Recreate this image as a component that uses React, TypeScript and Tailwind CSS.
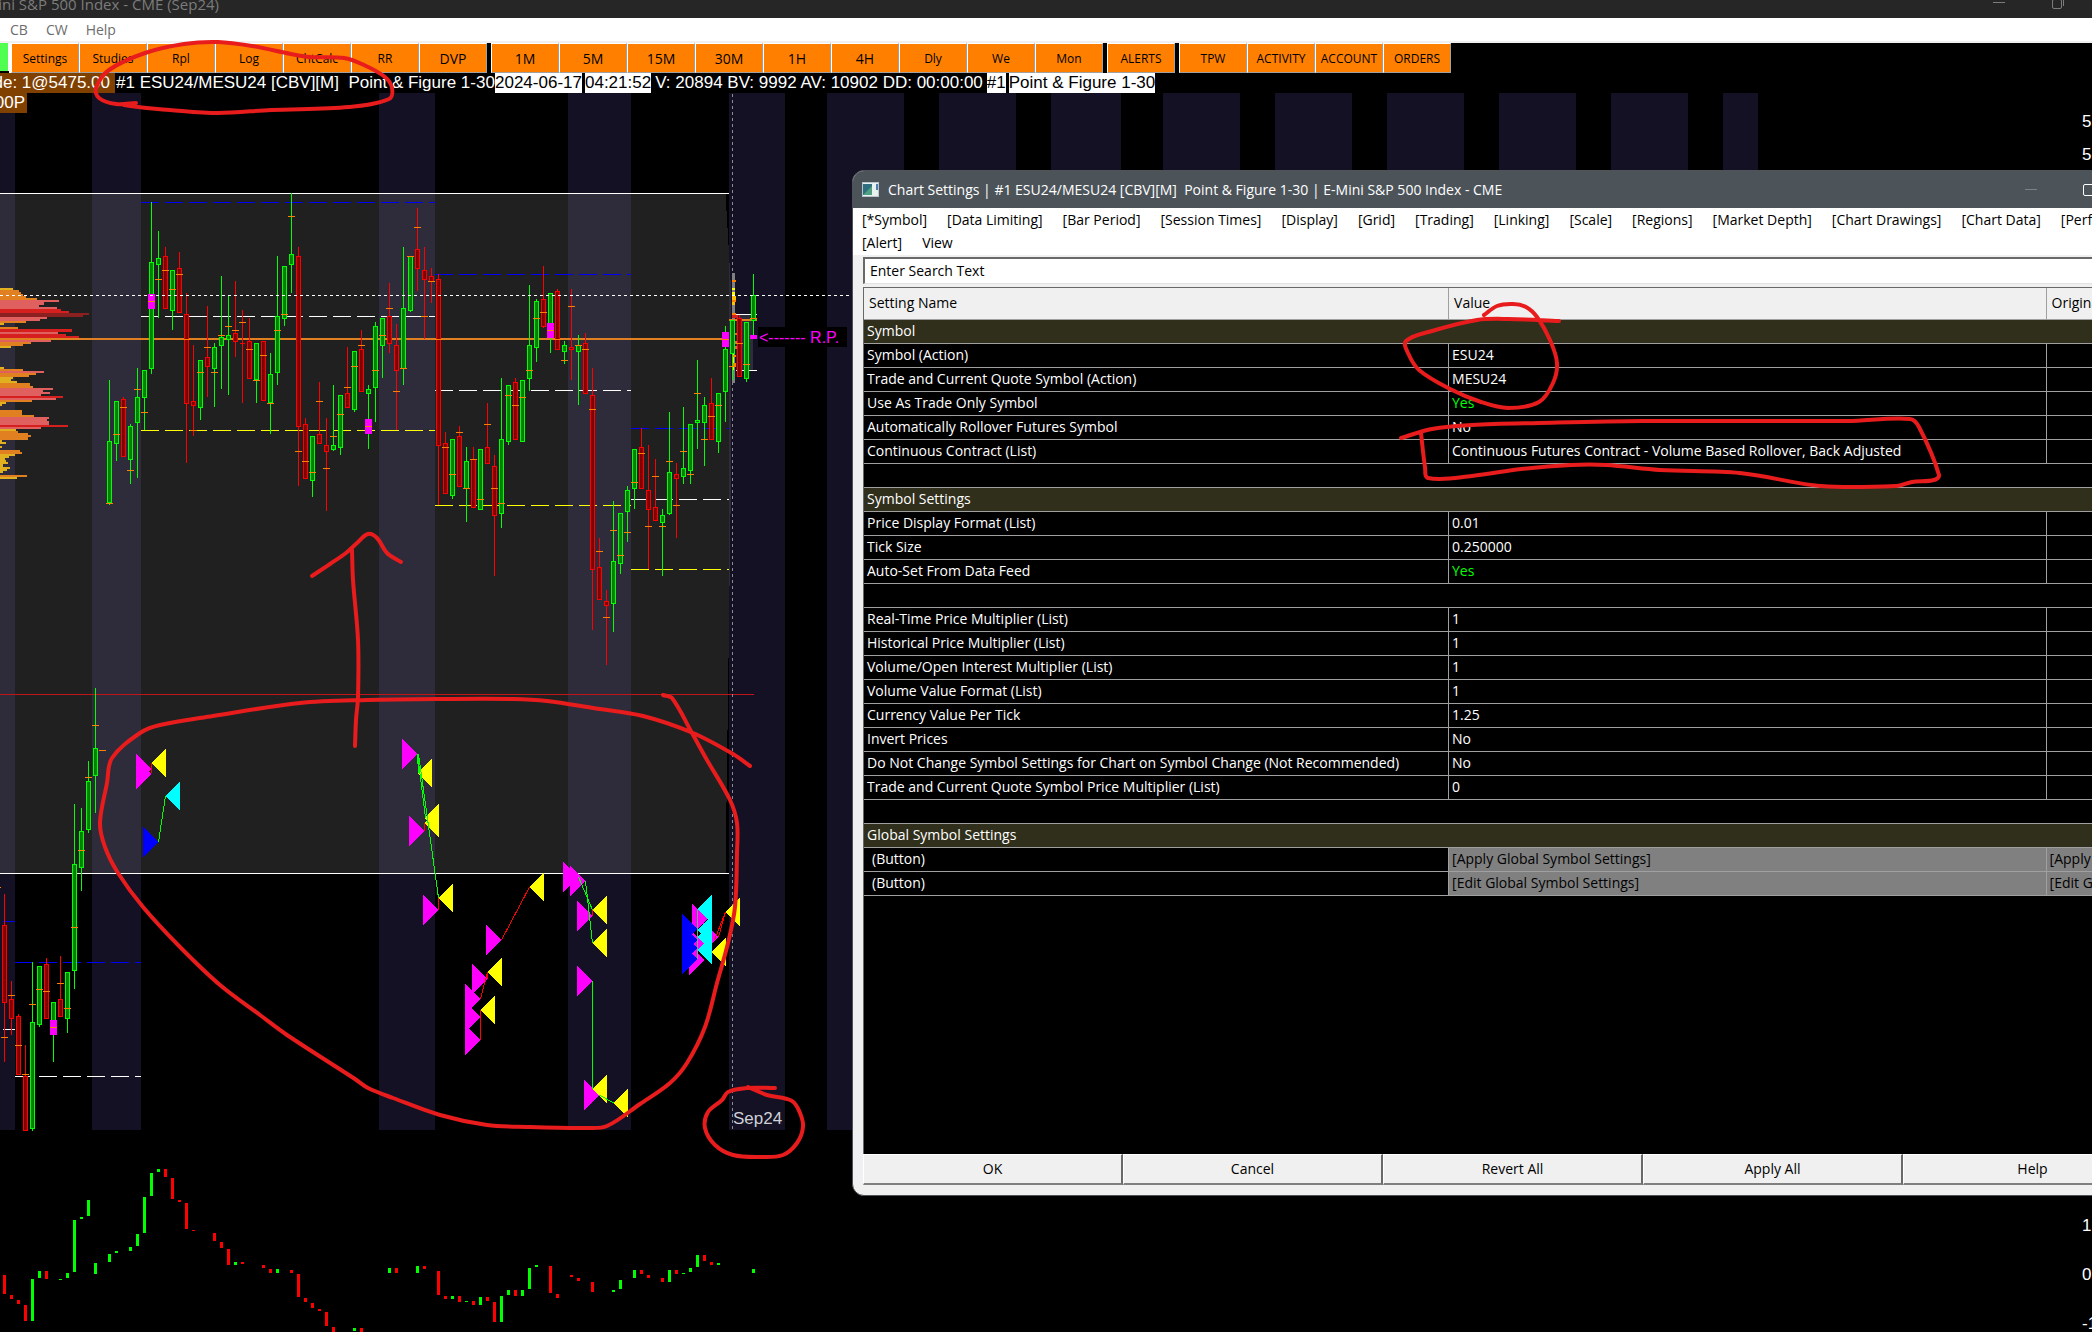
import React from "react";

const UI = "font-['Open_Sans','Noto_Sans',sans-serif]";
const CHART = "font-['Liberation_Sans',Arial,sans-serif]";

/* ---------- chart data ---------- */

const PITCH = 7;
const FIRST_X = 109;
const TOP = 180;
const STEPS = 3; // price steps per pixel
const barX = (i: number) => FIRST_X + PITCH * i;
const priceY = (v: number) => Math.floor(TOP + v / STEPS);

// [index, up, high, low, body top, body bottom, mark]
type Bar = [number, 0 | 1, number, number, number, number, number];

const bars: Bar[] = [
  [-15, 0, 2142, 2646, 2235, 2469, 2572], [-14, 0, 2403, 2565, 2457, 2517, 2446],
  [-13, 0, 2502, 2685, 2508, 2685, 2596], [-12, 0, 2595, 2853, 2688, 2853, 2683],
  [-11, 1, 2346, 2853, 2526, 2847, 2473], [-10, 1, 2358, 2541, 2358, 2535, 2428],
  [-9, 0, 2334, 2517, 2352, 2517, 2434], [-8, 1, 2466, 2646, 2466, 2530, 2542],
  [-7, 0, 2328, 2511, 2457, 2511, 2410], [-6, 1, 2376, 2559, 2376, 2517, 2485],
  [-5, 1, 1872, 2427, 2052, 2373, 2242], [-4, 1, 1884, 2133, 1953, 2064, 2011],
  [-3, 1, 1743, 1959, 1803, 1950, 1792], [-2, 1, 1524, 1899, 1704, 1788, 1636],
  [0, 1, 600, 975, 783, 971, 970], [1, 1, 663, 843, 663, 792, 763],
  [2, 0, 651, 833, 657, 833, 682], [3, 1, 732, 912, 738, 840, 871],
  [4, 1, 564, 894, 651, 729, 628], [5, 1, 570, 752, 570, 654, 697],
  [6, 1, 66, 582, 246, 567, 364], [7, 1, 153, 414, 234, 255, 298],
  [8, 0, 201, 387, 228, 387, 271], [9, 1, 270, 450, 270, 393, 328],
  [10, 0, 216, 399, 264, 399, 283], [11, 0, 339, 849, 402, 672, 478],
  [12, 0, 495, 768, 663, 678, 751], [13, 1, 540, 720, 540, 684, 577],
  [14, 0, 378, 651, 531, 561, 502], [15, 1, 489, 681, 501, 567, 577],
  [16, 1, 288, 627, 471, 498, 466], [17, 1, 345, 645, 465, 480, 439],
  [18, 0, 303, 531, 459, 486, 451], [19, 0, 390, 669, 489, 492, 427],
  [20, 0, 414, 597, 483, 597, 508], [21, 1, 489, 669, 489, 602, 601],
  [22, 0, 483, 665, 483, 665, 526], [23, 1, 519, 762, 582, 671, 670],
  [24, 1, 228, 615, 408, 579, 451], [25, 1, 258, 438, 258, 417, 403],
  [26, 1, 40, 339, 222, 255, 109], [27, 0, 201, 918, 228, 741, 814],
  [28, 0, 714, 897, 732, 897, 844], [29, 1, 768, 951, 768, 903, 877],
  [30, 0, 606, 792, 762, 792, 664], [31, 0, 714, 993, 795, 816, 865],
  [32, 1, 615, 813, 795, 810, 769], [33, 1, 645, 825, 645, 804, 703],
  [34, 0, 501, 684, 639, 684, 622], [35, 1, 513, 696, 513, 690, 559],
  [36, 0, 450, 636, 507, 636, 496], [37, 1, 615, 807, 627, 642, 739],
  [38, 1, 426, 726, 438, 624, 571], [39, 1, 414, 594, 414, 498, 466],
  [40, 0, 309, 519, 408, 492, 385], [41, 0, 432, 751, 495, 573, 634],
  [42, 1, 201, 615, 384, 567, 565], [43, 1, 228, 396, 228, 393, 229],
  [44, 0, 84, 333, 207, 267, 142], [45, 0, 201, 477, 270, 300, 409],
  [46, 0, 264, 369, 288, 306, 304], [47, 0, 282, 975, 297, 798, 478],
  [48, 0, 756, 942, 789, 942, 802], [49, 1, 777, 957, 777, 948, 883],
  [50, 0, 738, 921, 768, 921, 757], [51, 1, 801, 1026, 843, 927, 925],
  [52, 0, 801, 984, 837, 984, 838], [53, 1, 807, 990, 807, 990, 958],
  [54, 0, 669, 852, 801, 852, 733], [55, 0, 825, 1188, 858, 1008, 925],
  [56, 1, 594, 1044, 777, 1002, 970], [57, 1, 615, 795, 615, 786, 646],
  [58, 0, 594, 780, 606, 780, 676], [59, 1, 600, 786, 600, 786, 652],
  [60, 1, 315, 633, 495, 597, 571], [61, 1, 357, 546, 363, 504, 415],
  [62, 0, 258, 444, 357, 441, 397], [63, 1, 339, 519, 339, 456, 451],
  [64, 0, 327, 510, 333, 510, 477], [65, 1, 483, 552, 495, 516, 541],
  [66, 0, 327, 600, 501, 510, 379], [67, 1, 465, 675, 495, 516, 496],
  [68, 0, 459, 642, 489, 642, 508], [69, 0, 564, 1350, 645, 1170, 688],
  [70, 0, 1074, 1260, 1161, 1260, 1114], [71, 0, 1230, 1455, 1263, 1278, 1312],
  [72, 1, 963, 1356, 1143, 1272, 1051], [73, 1, 999, 1182, 999, 1152, 1126],
  [74, 1, 918, 1086, 930, 996, 1057], [75, 1, 807, 987, 807, 927, 907],
  [76, 0, 744, 927, 801, 927, 820], [77, 0, 795, 1168, 930, 990, 1039],
  [78, 0, 837, 1023, 981, 1023, 889], [79, 1, 987, 1188, 1005, 1029, 1039],
  [80, 1, 696, 1005, 876, 1002, 844], [81, 0, 849, 1074, 882, 897, 976],
  [82, 1, 681, 912, 864, 891, 814], [83, 1, 732, 912, 732, 873, 883],
  [84, 1, 540, 807, 720, 729, 640], [85, 1, 651, 858, 675, 729, 778],
  [86, 0, 594, 780, 669, 780, 709], [87, 1, 639, 819, 639, 786, 676],
  [88, 1, 438, 726, 507, 636, 478], [89, 1, 420, 600, 420, 522, 559],
  [90, 0, 405, 591, 414, 591, 490], [91, 1, 426, 606, 426, 598, 553],
  [92, 1, 282, 465, 345, 423, 415],
];

const magentaAt: Record<number, [number, number]> = {
  [-8]: [2520, 2565], 6: [342, 387], 37: [717, 762], 63: [429, 474], 88: [456, 501], 92: [465, 477],
};

// volume profile: [top, bottom, width, colour]
const G = "#e0b020", O = "#e08020", P = "#e06060", R = "#d62020", D = "#8b2020";
const profile: [number, number, number, string][] = [
  [324, 330, 39, G], [330, 336, 57, O], [336, 342, 63, O], [342, 348, 69, O], [348, 354, 78, O],
  [354, 360, 111, O], [360, 366, 177, P], [366, 375, 132, P], [375, 381, 117, P], [381, 387, 171, P],
  [387, 393, 183, R], [393, 399, 207, R], [399, 405, 267, D], [405, 411, 249, D], [411, 417, 141, P],
  [417, 423, 120, P], [423, 429, 78, O], [429, 435, 12, G], [441, 447, 54, O], [447, 456, 216, R],
  [456, 462, 174, P], [462, 468, 198, R], [468, 474, 237, R], [480, 486, 153, P], [486, 492, 93, O],
  [492, 498, 69, O], [498, 504, 33, G], [561, 567, 12, G], [567, 573, 69, O], [573, 579, 132, P],
  [579, 585, 108, O], [585, 591, 87, O], [591, 597, 39, G], [597, 603, 33, G], [603, 609, 51, G],
  [609, 618, 90, O], [618, 624, 99, O], [624, 630, 159, P], [630, 636, 129, P], [636, 642, 150, P],
  [642, 648, 123, P], [648, 654, 189, R], [654, 660, 168, P], [660, 666, 96, O], [666, 672, 18, G],
  [672, 678, 6, G], [690, 705, 66, O], [705, 711, 102, O], [711, 717, 147, P], [717, 723, 141, P],
  [723, 735, 147, P], [735, 741, 204, R], [741, 747, 123, P], [747, 753, 48, G], [753, 759, 54, O],
  [759, 765, 84, O], [765, 771, 93, O], [771, 780, 84, O], [780, 786, 6, G], [786, 792, 18, G],
  [798, 804, 6, G], [810, 816, 60, O], [816, 822, 66, O], [822, 828, 45, G], [828, 834, 27, G],
  [834, 840, 15, G], [840, 846, 18, G], [846, 852, 24, G], [852, 861, 9, G], [861, 867, 30, G],
  [867, 873, 21, G], [873, 879, 9, G], [885, 891, 81, O], [891, 897, 51, G],
];

// lower study: [index, up, top, bottom]
const study: [number, 0 | 1, number, number][] = [
  [-15, 0, 435, 491], [-14, 0, 495, 507], [-13, 0, 510, 522], [-12, 0, 525, 573], [-11, 1, 447, 573],
  [-10, 1, 423, 444], [-9, 0, 423, 447], [-7, 1, 447, 450], [-6, 1, 429, 444], [-5, 1, 270, 426],
  [-4, 1, 261, 267], [-3, 1, 210, 258], [-2, 1, 399, 432], [0, 1, 372, 396], [1, 1, 363, 369],
  [3, 1, 351, 363], [4, 1, 312, 348], [5, 1, 201, 309], [6, 1, 129, 198], [7, 1, 117, 126],
  [8, 0, 117, 141], [9, 0, 144, 207], [10, 0, 210, 216], [11, 0, 219, 297], [12, 0, 300, 303],
  [15, 0, 309, 333], [16, 0, 336, 354], [17, 0, 357, 405], [18, 1, 396, 405], [19, 0, 396, 402],
  [22, 0, 405, 414], [23, 0, 417, 429], [24, 1, 417, 429], [26, 0, 420, 429], [27, 0, 432, 501],
  [28, 0, 504, 516], [29, 0, 519, 534], [30, 0, 537, 543], [31, 0, 546, 588], [32, 0, 591, 606],
  [35, 1, 594, 603], [36, 0, 594, 606], [40, 1, 414, 429], [41, 0, 414, 429], [44, 1, 408, 429],
  [45, 0, 408, 417], [47, 0, 423, 495], [48, 0, 498, 507], [49, 1, 498, 507], [50, 0, 498, 516],
  [51, 1, 513, 516], [52, 0, 513, 525], [53, 1, 501, 525], [54, 0, 501, 513], [55, 0, 516, 576],
  [56, 1, 498, 576], [57, 1, 480, 495], [58, 0, 480, 498], [59, 1, 480, 498], [60, 1, 414, 477],
  [61, 1, 405, 411], [63, 0, 408, 489], [64, 0, 492, 504], [66, 0, 435, 441], [67, 0, 444, 453],
  [69, 0, 456, 486], [72, 1, 480, 486], [73, 1, 450, 477], [75, 1, 420, 444], [76, 0, 420, 432],
  [77, 0, 435, 444], [79, 0, 444, 456], [80, 1, 420, 456], [81, 0, 420, 432], [82, 1, 429, 432],
  [83, 1, 414, 426], [84, 1, 375, 411], [85, 0, 375, 393], [86, 0, 396, 405], [87, 1, 399, 405],
  [92, 1, 417, 429],
];

const bands: [number, number][] = [
  [0, 15], [92, 141], [379, 435], [568, 631], [729, 785], [827, 904], [939, 1016], [1051, 1121],
  [1163, 1240], [1275, 1352], [1387, 1464], [1499, 1576], [1611, 1688], [1723, 1758],
];

// dashed levels: [y, x1, x2, colour]
const levels: [number, number, number, string][] = [
  [202, 141, 435, "#0000ff"], [274, 435, 631, "#0000ff"], [428, 631, 729, "#0000ff"],
  [962, 15, 141, "#0000ff"], [921, 3, 15, "#0000ff"],
  [316, 141, 435, "#fff"], [390, 435, 631, "#fff"], [499, 631, 729, "#fff"],
  [1076, 15, 141, "#fff"], [1029, 3, 15, "#fff"],
  [430, 141, 435, "#ff0"], [505, 435, 631, "#ff0"], [569, 631, 729, "#ff0"],
];

const LIME = "#00ff00", RED = "#ff0000";
const links: [number, number, number, number, string][] = [
  [151, 763, 151, 773, RED], [158, 842, 165, 796, LIME], [417, 754, 418, 773, LIME],
  [417, 754, 425, 818, LIME], [418, 754, 438, 898, LIME], [424, 823, 424, 831, RED],
  [438, 898, 438, 910, RED], [501, 940, 529, 887, RED], [487, 972, 487, 979, RED],
  [480, 999, 487, 972, RED], [480, 1010, 480, 1040, RED], [585, 881, 592, 943, LIME],
  [578, 877, 592, 910, LIME], [592, 910, 592, 916, RED], [592, 981, 592, 1089, LIME],
  [599, 1095, 613, 1103, LIME], [718, 937, 725, 912, RED], [714, 940, 725, 912, RED],
];

// trade markers: [tip x, tip y, direction, colour]
const M = "#ff00ff", Y = "#ffff00", C = "#00ffff", B = "#0000ff";
const markers: [number, number, 1 | -1, string][] = [
  [151, 769, 1, M], [151, 774, 1, M], [151, 763, -1, Y], [165, 796, -1, C], [158, 842, 1, B],
  [417, 754, 1, M], [417, 773, -1, Y], [424, 831, 1, M], [424, 818, -1, Y], [424, 823, -1, Y],
  [438, 910, 1, M], [438, 898, -1, Y], [501, 940, 1, M], [529, 887, -1, Y], [487, 979, 1, M],
  [487, 972, -1, Y], [480, 999, 1, M], [480, 1017, 1, M], [480, 1040, 1, M], [480, 1010, -1, Y],
  [578, 877, 1, M], [585, 881, 1, M], [592, 916, 1, M], [592, 910, -1, Y], [592, 943, -1, Y],
  [592, 981, 1, M], [599, 1095, 1, M], [592, 1089, -1, Y], [613, 1103, -1, Y],
  [707, 919, 1, M], [704, 944, 1, M], [718, 937, 1, M], [704, 960, 1, M],
  [697, 929, 1, B], [697, 940, 1, B], [697, 948, 1, B], [697, 959, 1, B],
  [697, 909, -1, C], [697, 930, -1, C], [697, 937, -1, C], [697, 950, -1, C],
  [725, 912, -1, Y], [711, 952, -1, Y],
];

// [x, y, width, height, colour] of the small profile beside the session line
const miniProfile: [number, number, number, number, string][] = [
  [732, 273, 3, 110, "#808080"], [732, 280, 4, 2, "#ff8000"], [732, 288, 3, 2, "#ffff00"],
  [732, 292, 3, 3, "#ffff00"], [732, 296, 4, 4, "#ffc000"], [732, 300, 4, 2, "#ff8000"],
  [732, 302, 3, 3, "#ffc000"], [732, 313, 4, 2, "#ff8000"], [732, 315, 6, 3, "#d62020"],
  [732, 333, 5, 2, P], [732, 341, 5, 3, P], [732, 346, 5, 3, P], [732, 354, 2, 16, "#ffff00"],
  [732, 355, 4, 2, "#ff8000"], [732, 363, 4, 3, "#ff8000"],
];

function Candle({ bar }: { bar: Bar }) {
  const [i, up, high, low, top, bottom, mark] = bar;
  const x = barX(i);
  const line = up ? LIME : RED;
  const t = priceY(top);
  const h = Math.max(1, priceY(bottom) - t);
  const m = magentaAt[i];
  return (
    <g shapeRendering="crispEdges">
      <rect x={x} y={priceY(high)} width={1} height={priceY(low) - priceY(high)} fill={line} />
      <rect x={x - 2} y={t} width={5} height={h} fill={line} />
      {h > 2 && <rect x={x - 1} y={t + 1} width={3} height={h - 2} fill={up ? "#008000" : "#800000"} />}
      {m && <rect x={x - 3} y={priceY(m[0])} width={7} height={priceY(m[1]) - priceY(m[0])} fill={M} />}
      <rect x={x - 3} y={priceY(mark)} width={7} height={1} fill="#ff8000" />
    </g>
  );
}

function PriceChart() {
  return (
    <svg className={`absolute inset-0 h-full w-full ${CHART}`} aria-label="Price chart" role="img">
      <g transform="translate(0 -73)">
        <g shapeRendering="crispEdges">
          {bands.map(([a, b]) => (
            <rect key={a} x={a} y={93} width={b - a} height={1037} fill="#131123" />
          ))}
          <path
            d="M0 193H726V211H727V228H728V245H729V263H730V280H731V514H730V586H729V658H728V730H727V802H726V873H0Z"
            fill="#808080"
            fillOpacity={0.25}
          />
          <rect x={0} y={193} width={729} height={1} fill="#fff" />
          <rect x={0} y={873} width={729} height={1} fill="#fff" />
          <rect x={0} y={694} width={754} height={1} fill="#c01418" />
          {profile.map(([a, b, w, c]) => (
            <rect key={a} x={0} y={TOP + a / 3} width={w / 3} height={(b - a) / 3} fill={c} />
          ))}
          <rect x={0} y={338} width={729} height={2} fill={O} />
          {levels.map(([y, x1, x2, c]) => (
            <line key={`${y}`} x1={x1} x2={x2} y1={y + 0.5} y2={y + 0.5} stroke={c} strokeDasharray="18 6" />
          ))}
          <line x1={732.5} x2={732.5} y1={94} y2={1130} stroke="#8c8c98" strokeDasharray="3 3" />
          <rect x={736} y={314} width={17} height={56} fill="#808080" fillOpacity={0.25} />
          {miniProfile.map(([x, y, w, h, c], k) => (
            <rect key={k} x={x} y={y} width={w} height={h} fill={c} />
          ))}
          <rect x={736} y={314} width={21} height={1} fill="#fff" />
          <rect x={736} y={370} width={21} height={1} fill="#fff" />
          <rect x={729} y={319} width={28} height={2} fill={O} />
        </g>
        {bars.map((b) => (
          <Candle key={b[0]} bar={b} />
        ))}
        <g shapeRendering="crispEdges">
          <rect x={99} y={750} width={7} height={1} fill="#ff8000" />
          <rect x={0} y={887} width={1} height={1} fill="#ff8000" />
          <line x1={0} x2={853} y1={295.5} y2={295.5} stroke="#fff" strokeDasharray="3 3" />
          {markers.map(([x, y, d, c], k) => (
            <path key={k} d={`M${x} ${y}l${-15 * d} -15v30z`} fill={c} />
          ))}
          {links.map(([x1, y1, x2, y2, c], k) => (
            <line key={k} x1={x1 + 0.5} y1={y1} x2={x2 + 0.5} y2={y2} stroke={c} />
          ))}
          <rect x={697} y={909} width={1} height={50} fill="#60b080" />
          {study.map(([i, up, a, b]) => (
            <rect key={i} x={barX(i) - 1} y={1130 + a / 3} width={3} height={(b - a) / 3} fill={up ? LIME : RED} />
          ))}
          <rect x={758} y={327} width={89} height={20} fill="#000" />
        </g>
        <text x={759} y={343} fontSize={16} fill={M}>{"<------- R.P."}</text>
        <text x={733} y={1124} fontSize={17} fill="#d0d0d8">Sep24</text>
        <g fontSize={17} fill="#fff">
          <text x={2082} y={127}>5</text>
          <text x={2082} y={160}>5</text>
          <text x={2082} y={1231}>1</text>
          <text x={2082} y={1280}>0</text>
          <text x={2082} y={1329}>-1</text>
        </g>
      </g>
    </svg>
  );
}

/* ---------- freehand marks ---------- */

type Pt = [number, number];

const strokes: Pt[][] = [
  [[136, 103], [116, 104], [99, 98], [96, 88], [109, 70], [145, 53], [184, 44], [218, 42], [252, 46], [291, 54], [310, 57], [344, 58], [364, 65], [385, 77], [392, 88], [389, 99], [349, 107], [271, 110], [218, 113], [170, 110], [138, 107], [124, 105]],
  [[355, 746], [356, 720], [358, 697], [358, 640], [353, 580], [352, 550]],
  [[312, 576], [330, 564], [346, 553], [357, 543], [368, 534], [377, 538], [387, 553], [401, 562]],
  [[663, 695], [672, 698], [692, 733], [707, 760], [730, 800], [737, 823], [737, 853], [735, 907], [728, 943], [717, 983], [705, 1027], [687, 1063], [670, 1083], [640, 1104], [607, 1126], [587, 1128], [527, 1127], [487, 1125], [440, 1115], [393, 1098], [368, 1088], [355, 1079], [287, 1035], [260, 1015], [220, 985], [180, 947], [143, 907], [118, 873], [105, 847], [100, 823], [107, 783], [112, 758], [140, 733], [160, 725], [213, 716], [300, 703], [367, 700], [440, 699], [513, 699], [547, 701], [593, 708], [643, 716], [693, 733], [733, 754], [750, 766]],
  [[775, 1088], [747, 1088], [728, 1092], [722, 1100], [708, 1112], [705, 1128], [715, 1145], [733, 1155], [760, 1157], [783, 1155], [797, 1143], [803, 1127], [800, 1113], [792, 1101], [767, 1095], [748, 1087]],
  [[1484, 315], [1497, 306], [1513, 304], [1526, 307], [1537, 317], [1550, 340], [1557, 363], [1553, 383], [1539, 402], [1508, 408], [1481, 402], [1450, 389], [1419, 370], [1408, 353], [1406, 341], [1432, 331], [1477, 320], [1508, 319], [1559, 321]],
  [[1401, 438], [1432, 429], [1472, 425], [1539, 423], [1642, 421], [1847, 421], [1910, 419], [1919, 427], [1939, 475], [1934, 480], [1912, 482], [1896, 486], [1821, 486], [1740, 473], [1660, 470], [1606, 465], [1571, 465], [1521, 469], [1472, 476], [1428, 478], [1425, 467], [1421, 433]],
];

function smooth(p: Pt[]) {
  let d = `M${p[0][0]} ${p[0][1]}`;
  for (let i = 0; i < p.length - 1; i++) {
    const a = p[i - 1] ?? p[i], b = p[i], c = p[i + 1], e = p[i + 2] ?? c;
    const len = Math.hypot(c[0] - b[0], c[1] - b[1]);
    const la = Math.hypot(c[0] - a[0], c[1] - a[1]) || 1;
    const lb = Math.hypot(e[0] - b[0], e[1] - b[1]) || 1;
    const k = len / 3;
    d += `C${b[0] + ((c[0] - a[0]) / la) * k} ${b[1] + ((c[1] - a[1]) / la) * k} ${c[0] - ((e[0] - b[0]) / lb) * k} ${c[1] - ((e[1] - b[1]) / lb) * k} ${c[0]} ${c[1]}`;
  }
  return d;
}

function Marks() {
  return (
    <svg className="pointer-events-none absolute inset-0 z-20 h-full w-full" aria-hidden="true">
      <g fill="none" stroke="#e81c1c" strokeWidth={4} strokeLinecap="round" strokeLinejoin="round">
        {strokes.map((s, k) => (
          <path key={k} d={smooth(s)} />
        ))}
      </g>
    </svg>
  );
}

/* ---------- toolbar ---------- */

const toolGroups: { label: string; big?: boolean }[][] = [
  [{ label: "Settings" }, { label: "Studies" }, { label: "Rpl" }, { label: "Log" }, { label: "ChtCalc" }, { label: "RR" }, { label: "DVP", big: true }],
  [{ label: "1M", big: true }, { label: "5M", big: true }, { label: "15M", big: true }, { label: "30M", big: true }, { label: "1H", big: true }, { label: "4H", big: true }, { label: "Dly" }, { label: "We" }, { label: "Mon" }],
  [{ label: "ALERTS" }],
  [{ label: "TPW" }, { label: "ACTIVITY" }, { label: "ACCOUNT" }, { label: "ORDERS" }],
];

function Toolbar() {
  return (
    <div className="flex h-[30px] shrink-0 gap-1 overflow-hidden bg-black">
      <div className="flex">
        <button aria-label="Connection" className="h-[28px] w-[9px] border-r border-white bg-[#50ff50]" />
        <span className="w-[2px] bg-white" />
        <ToolGroup items={toolGroups[0]} />
      </div>
      {toolGroups.slice(1).map((g) => (
        <ToolGroup key={g[0].label} items={g} />
      ))}
    </div>
  );
}

function ToolGroup({ items }: { items: { label: string; big?: boolean }[] }) {
  return (
    <div className="flex">
      {items.map((t) => (
        <button
          key={t.label}
          className={`w-[68px] border-t border-r border-b border-l border-t-white border-r-[#a0a0a0] border-b-[#a0a0a0] border-l-white bg-[#ff8000] text-center text-black ${t.big ? "text-[14px]" : "pt-px text-[12px]"}`}
        >
          {t.label}
        </button>
      ))}
    </div>
  );
}

/* ---------- settings dialog ---------- */

const tabs = ["[*Symbol]", "[Data Limiting]", "[Bar Period]", "[Session Times]", "[Display]", "[Grid]", "[Trading]", "[Linking]", "[Scale]", "[Regions]", "[Market Depth]", "[Chart Drawings]", "[Chart Data]", "[Performance]", "[Alert]", "View"];

type Row =
  | { kind: "section"; name: string }
  | { kind: "blank" }
  | { kind: "value"; name: string; value: string }
  | { kind: "button"; value: string };

const v = (name: string, value: string): Row => ({ kind: "value", name, value });

const rows: Row[] = [
  { kind: "section", name: "Symbol" },
  v("Symbol (Action)", "ESU24"),
  v("Trade and Current Quote Symbol (Action)", "MESU24"),
  v("Use As Trade Only Symbol", "Yes"),
  v("Automatically Rollover Futures Symbol", "No"),
  v("Continuous Contract (List)", "Continuous Futures Contract - Volume Based Rollover, Back Adjusted"),
  { kind: "blank" },
  { kind: "section", name: "Symbol Settings" },
  v("Price Display Format (List)", "0.01"),
  v("Tick Size", "0.250000"),
  v("Auto-Set From Data Feed", "Yes"),
  { kind: "blank" },
  v("Real-Time Price Multiplier (List)", "1"),
  v("Historical Price Multiplier (List)", "1"),
  v("Volume/Open Interest Multiplier (List)", "1"),
  v("Volume Value Format (List)", "1"),
  v("Currency Value Per Tick", "1.25"),
  v("Invert Prices", "No"),
  v("Do Not Change Symbol Settings for Chart on Symbol Change (Not Recommended)", "No"),
  v("Trade and Current Quote Symbol Price Multiplier (List)", "0"),
  { kind: "blank" },
  { kind: "section", name: "Global Symbol Settings" },
  { kind: "button", value: "[Apply Global Symbol Settings]" },
  { kind: "button", value: "[Edit Global Symbol Settings]" },
];

const LINE = "border-b border-[#a0a0a0]";

function SettingRow({ row }: { row: Row }) {
  if (row.kind === "section")
    return (
      <tr className={`h-6 bg-[#302f1b] ${LINE}`}>
        <th colSpan={3} scope="colgroup" className="px-[3px] text-left font-normal">{row.name}</th>
      </tr>
    );
  if (row.kind === "blank")
    return (
      <tr className={`h-6 ${LINE}`}>
        <td colSpan={3} />
      </tr>
    );
  if (row.kind === "button")
    return (
      <tr className={`h-6 ${LINE}`}>
        <td className="px-2">(Button)</td>
        {[0, 1].map((k) => (
          <td key={k} className="border-l border-[#a0a0a0] bg-[#808080] px-[3px] text-black">
            <button className="block w-full text-left leading-5 whitespace-nowrap">{row.value}</button>
          </td>
        ))}
      </tr>
    );
  return (
    <tr className={`h-6 ${LINE}`}>
      <td className="px-[3px]">{row.name}</td>
      <td className={`border-l border-[#a0a0a0] px-[3px] ${row.value === "Yes" ? "text-[#00ff00]" : ""}`}>{row.value}</td>
      <td className="border-l border-[#a0a0a0]" />
    </tr>
  );
}

function SettingsDialog() {
  return (
    <section
      aria-label="Chart Settings"
      className={`absolute top-[170px] -right-[82px] left-[852px] z-10 flex h-[1026px] flex-col overflow-hidden rounded-xl border border-[#4c545a] bg-[#f0f0f0] text-[14px] leading-5 text-black ${UI}`}
    >
      <header className="flex h-[37px] shrink-0 items-center bg-[#4c545a] pr-[124px] pl-[9px] text-white">
        <svg width="17" height="15" viewBox="0 0 17 15" aria-hidden="true">
          <rect x="0.5" y="0.5" width="16" height="14" fill="#e8f0f0" stroke="#b8c4cc" />
          <rect x="1" y="2" width="9" height="11" fill="#2f6f80" />
          <path d="M1 13L10 4V13Z" fill="#4fa080" />
          <rect x="14" y="2" width="2" height="6" fill="#4a7fb0" />
        </svg>
        <h2 className="ml-[9px] flex-1 whitespace-pre">Chart Settings | #1 ESU24/MESU24 [CBV][M]  Point &amp; Figure 1-30 | E-Mini S&amp;P 500 Index - CME</h2>
        <button aria-label="Minimize" className="mr-[46px]">
          <svg width="12" height="12" viewBox="0 0 12 12"><path d="M0 5.5H12" stroke="#7c8387" /></svg>
        </button>
        <button aria-label="Maximize" className="-mr-[46px]">
          <svg width="12" height="12" viewBox="0 0 12 12"><rect x="0.5" y="0.5" width="11" height="11" rx="1.5" fill="none" stroke="#fff" /></svg>
        </button>
      </header>
      <nav className="flex shrink-0 flex-wrap gap-x-5 bg-white pb-px pl-[9px]">
        {tabs.map((t) => (
          <button key={t} className="h-[23px] whitespace-nowrap">{t}</button>
        ))}
      </nav>
      <div className="flex min-h-0 flex-1 flex-col px-[10px] pt-[2px] pb-[10px]">
        <input
          aria-label="Enter Search Text"
          defaultValue="Enter Search Text"
          className="h-[27px] w-full shrink-0 border-t-2 border-r border-b border-l-2 border-t-[#696969] border-r-[#e3e3e3] border-b-[#e3e3e3] border-l-[#696969] bg-white px-[5px] pb-[2px] outline-none"
        />
        <div className="mt-[3px] min-h-0 flex-1 overflow-hidden border-t border-l border-[#696969] bg-black text-white">
          <table className="w-full table-fixed border-collapse">
            <thead>
              <tr className={`h-[31px] bg-[#f0f0f0] text-left text-black ${LINE}`}>
                <th className="w-[45%] px-[5px] font-normal">Setting Name</th>
                <th className="w-[46%] border-l border-[#a0a0a0] px-[5px] font-normal">Value</th>
                <th className="border-l border-[#a0a0a0] px-[5px] font-normal whitespace-nowrap">Original Value</th>
              </tr>
            </thead>
            <tbody>
              {rows.map((r, k) => (
                <SettingRow key={k} row={r} />
              ))}
            </tbody>
          </table>
        </div>
        <div className="grid h-[31px] shrink-0 grid-cols-5">
          {["OK", "Cancel", "Revert All", "Apply All", "Help"].map((b) => (
            <button key={b} className="border-t border-r-2 border-b-2 border-l border-t-white border-r-[#696969] border-b-[#808080] border-l-white bg-[#f0f0f0]">{b}</button>
          ))}
        </div>
      </div>
    </section>
  );
}

/* ---------- page ---------- */

export default function App() {
  return (
    <div className={`relative flex h-screen flex-col overflow-hidden bg-black ${UI}`}>
      <header className="flex h-[18px] shrink-0 items-start justify-between overflow-hidden bg-[#262626] pr-[28px] text-[#7c7c7c]">
        <div className="flex w-[219px] justify-end">
          <h1 className="text-[15px] leading-[9px] whitespace-nowrap">E-Mini S&amp;P 500 Index - CME (Sep24)</h1>
        </div>
        <div className="flex gap-[47px]">
          <button aria-label="Minimize">
            <svg width="12" height="10" viewBox="0 0 12 10"><path d="M0 2.5H12" stroke="#7c7c7c" /></svg>
          </button>
          <button aria-label="Restore">
            <svg width="12" height="10" viewBox="0 0 12 10" fill="none" stroke="#7c7c7c">
              <rect x="0.5" y="-0.5" width="9" height="9" rx="1.5" />
              <path d="M11.5 0V6" />
            </svg>
          </button>
        </div>
      </header>
      <nav className="flex h-[25px] shrink-0 gap-[18px] border-b-2 border-[#f0f0f0] bg-white pl-[10px] text-[14px] leading-6 text-[#6d6d6d]">
        <button>CB</button>
        <button>CW</button>
        <button>Help</button>
      </nav>
      <Toolbar />
      <main className="relative min-h-0 flex-1">
        <PriceChart />
        <div className={`relative text-[17px] leading-5 whitespace-pre text-white ${CHART}`}>
          <div className="flex h-5">
            <span className="flex w-[115px] justify-end bg-[#804000] pr-[5px]">Trade: 1@5475.00</span>
            <span className="ml-px w-[379px]">#1 ESU24/MESU24 [CBV][M]  Point &amp; Figure 1-30</span>
            <span className="bg-white text-black">2024-06-17</span>
            <span className="ml-[3px] bg-white text-black">04:21:52</span>
            <span className="mx-[4px]">V: 20894 BV: 9992 AV: 10902 DD: 00:00:00</span>
            <span className="bg-white text-black">#1</span>
            <span className="ml-[3px] bg-white text-black">Point &amp; Figure 1-30</span>
          </div>
          <div className="flex h-5 w-[27px] justify-end bg-[#804000] pr-[2px]">0.00P</div>
        </div>
      </main>
      <SettingsDialog />
      <Marks />
    </div>
  );
}
